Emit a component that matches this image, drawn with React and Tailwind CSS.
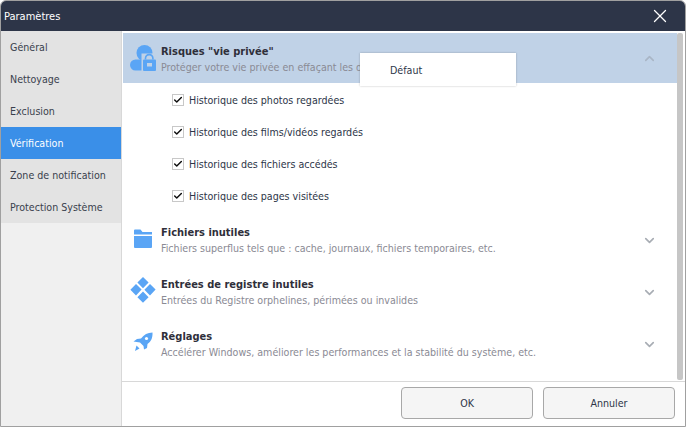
import React from "react";
import { X, ChevronUp, ChevronDown, Check } from "lucide-react";

function PrivacyIcon() {
  return (
    <svg width="26" height="27" viewBox="0 0 26 27" className="shrink-0">
      <circle cx="14.500" cy="8" r="8" fill="#5aa5f5" />
      <rect x="0" y="14.500" width="18" height="11" rx="5.500" fill="#5aa5f5" />
      <rect x="11.500" y="8.500" width="14.500" height="18.500" fill="#c0d2e7" />
      <path d="M15.500 14.500v-1.200a3.700 3.700 0 0 1 7.400 0v1.200" fill="none" stroke="#5aa5f5" strokeWidth="1.600" />
      <rect x="13" y="14.500" width="13" height="11.500" rx="1" fill="#5aa5f5" />
      <rect x="17" y="18" width="5" height="3.500" fill="#c0d2e7" />
    </svg>
  );
}
function FolderIcon() {
  return (
    <svg width="18" height="19" viewBox="0 0 18 19" className="shrink-0">
      <path d="M0 1.500a1 1 0 0 1 1-1h5.500l2 2.500H18v2.500H0z" fill="#5aa5f5" />
      <path d="M0 7h18v11a1 1 0 0 1-1 1H1a1 1 0 0 1-1-1z" fill="#5aa5f5" />
    </svg>
  );
}
function RegistryIcon() {
  return (
    <svg width="26" height="26" viewBox="0 0 26 26" className="shrink-0">
      <path d="M13 0l5.600 5.600L13 11.200 7.400 5.600z M6 7l5.600 5.600L6 18.400.4 12.800z M20 7l5.600 5.600L20 18.400l-5.600-5.600z M13 14.600l5.600 5.600-5.600 5.600-5.600-5.600z" fill="#5aa5f5" />
    </svg>
  );
}
function RocketIcon() {
  return (
    <svg width="20" height="20" viewBox="0 0 20 20" className="shrink-0">
      <path d="M19.500 0.500c.3 5.500-1.500 9-5 11.500l-.5 4-3 1.500-.5-3.500-3.500-3.500L0.500 9.500 4 7l4-.5C11 2.500 14.500 .5 19.500 .5z" fill="#5aa5f5" />
      <circle cx="13.500" cy="6.500" r="1.600" fill="#fff" />
      <path d="M3.500 13.500l3 3L2 19z" fill="#5aa5f5" />
    </svg>
  );
}

function CheckRow({ label }) {
  return (
    <div className="flex h-8 items-center pl-[49px]">
      <span className="flex h-[12px] w-[12px] shrink-0 items-center justify-center border border-[#c8c8c8] bg-white">
        <Check size={10} strokeWidth={3.500} color="#111" />
      </span>
      <span className="ml-[5px] pt-[2px] text-[10.6px] text-[#2d3548]">{label}</span>
    </div>
  );
}

function Section({ icon, title, desc, active, open }) {
  return (
    <div className={`flex h-[50px] items-center pr-[20px] ${active ? "bg-[#c0d2e7]" : "bg-white"}`}>
      <div className={`flex w-[38px] shrink-0 justify-center pl-[1px] ${active ? "" : "pb-[4px]"}`}>{icon}</div>
      <div className={`min-w-0 flex-1 leading-[16px] ${active ? "pt-[3px]" : "pt-0"}`}>
        <div className="h-[16px] text-[11px] font-bold text-[#2f2f3a]">{title}</div>
        <div className="-mt-[1px] h-[16px] whitespace-nowrap text-[10.6px] text-[#8a8a94]">{desc}</div>
      </div>
      {open ? <ChevronUp size={15} strokeWidth={2.600} color="#a9b6c6" /> : <ChevronDown size={15} strokeWidth={2.600} color="#a8adb4" />}
    </div>
  );
}

export default function App() {
  return (
    <div className="flex h-[427px] w-[686px] flex-col overflow-hidden rounded-t-[6px] border border-[#a0a0a0] bg-white font-['DejaVu_Sans_Condensed','DejaVu_Sans',sans-serif]">
      <div className="flex h-[30px] shrink-0 items-center justify-between bg-[#2d3548] pl-[3px] pr-[14px] text-[11px] text-white">
        <span className="pt-[2px]">Paramètres</span>
        <X size={22} strokeWidth={1.400} color="#fff" />
      </div>
      <div className="flex min-h-0 flex-1">
        <div className="flex w-[121px] shrink-0 flex-col border-r border-[#d8d8d8] bg-[#f0f0f0] text-[10.6px] text-[#3a3f4d]">
          {["Général", "Nettoyage", "Exclusion", "Vérification", "Zone de notification", "Protection Système"].map((t) => (
            <div key={t} className={`flex h-8 items-center pl-[9px] pt-[2px] ${t === "Vérification" ? "bg-[#3a8fe8] text-white" : "bg-[#e3e3e3]"}`}>{t}</div>
          ))}
        </div>
        <div className="flex min-w-0 flex-1 flex-col">
          <div className="relative flex min-h-0 flex-1 pl-[1px] pt-[2px]">
            <div className="min-w-0 flex-1">
              <Section active open icon={<PrivacyIcon />} title={'Risques "vie privée"'} desc="Protéger votre vie privée en effaçant les données personnelles." />
              <div className="pt-[1px]">
                <CheckRow label="Historique des photos regardées" />
                <CheckRow label="Historique des films/vidéos regardés" />
                <CheckRow label="Historique des fichiers accédés" />
                <CheckRow label="Historique des pages visitées" />
              </div>
              <div className="mt-[3px]">
                <Section icon={<FolderIcon />} title="Fichiers inutiles" desc="Fichiers superflus tels que : cache, journaux, fichiers temporaires, etc." />
                <div className="h-[2px]" />
                <Section icon={<RegistryIcon />} title="Entrées de registre inutiles" desc="Entrées du Registre orphelines, périmées ou invalides" />
                <div className="h-[2px]" />
                <Section icon={<RocketIcon />} title="Réglages" desc="Accélérer Windows, améliorer les performances et la stabilité du système, etc." />
              </div>
            </div>
            <div className="mb-[1px] w-[6px] shrink-0 rounded-[2px] bg-[#c6c6c6]" />
            <div className="w-[2px] shrink-0" />
            <div className="absolute left-[238px] top-[22px] flex h-[33px] w-[156px] items-center bg-white pl-[30px] pt-[2px] text-[10.6px] text-[#2d3548] shadow-[0_0_2px_rgba(0,0,0,0.25)]">Défaut</div>
          </div>
          <div className="flex h-[45px] shrink-0 items-center justify-end gap-[10px] border-t border-[#d8d8d8] pb-[2px] pr-[10px]">
            <button className="h-[32px] w-[132px] rounded-[4px] border border-[#a8a8a8] bg-[#f5f5f5] pt-[2px] text-[10.6px] text-[#2d3548]">OK</button>
            <button className="h-[32px] w-[132px] rounded-[4px] border border-[#a8a8a8] bg-[#f5f5f5] pt-[2px] text-[10.6px] text-[#2d3548]">Annuler</button>
          </div>
        </div>
      </div>
    </div>
  );
}
